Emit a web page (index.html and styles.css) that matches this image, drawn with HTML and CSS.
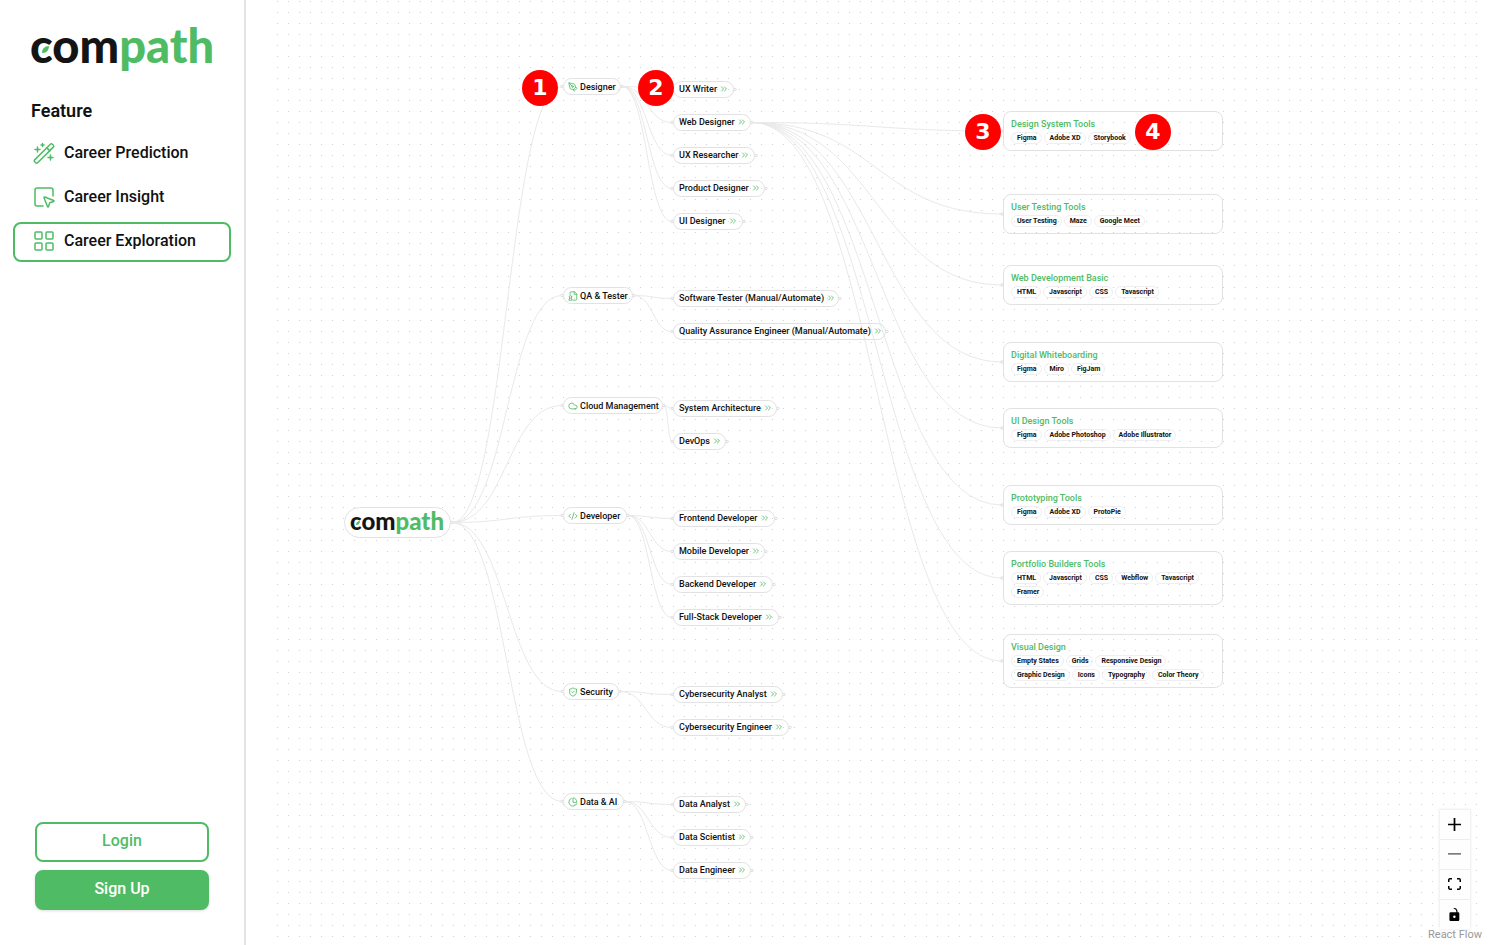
FILE: index.html
```html
<!DOCTYPE html>
<html lang="en">
<head>
<meta charset="utf-8">
<meta name="viewport" content="width=device-width, initial-scale=1">
<title>Compath – Career Exploration</title>
<link rel="stylesheet" href="styles.css">
</head>
<body>
<svg class="sprite" aria-hidden="true">
  <symbol id="leaf" viewBox="0 0 7 7"><path d="M0 7C0 3 2.500 0 7 0c-.2 4.500-2.500 7.200-7 7z"/></symbol>
  <symbol id="chevrons" viewBox="0 0 24 24"><path d="m6 17 5-5-5-5M13 17l5-5-5-5"/></symbol>
  <symbol id="pen" viewBox="0 0 24 24"><path d="M15.700 21.300a1 1 0 0 1-1.400 0l-1.600-1.600a1 1 0 0 1 0-1.400l5.600-5.600a1 1 0 0 1 1.400 0l1.600 1.600a1 1 0 0 1 0 1.400zM18 13l-1.400-6.900a1 1 0 0 0-.7-.8L3.200 2a1 1 0 0 0-1.200 1.200l3.300 12.700a1 1 0 0 0 .8.700L13 18M2.300 2.300l7.300 7.300"/><circle cx="11" cy="11" r="2"/></symbol>
  <symbol id="file" viewBox="0 0 24 24"><path d="M5 8V4a2 2 0 0 1 2-2h9l5 5v13a2 2 0 0 1-2 2h-7M15 2v6h6M4 17l-2 5h8l-2-5"/><circle cx="6" cy="14" r="3"/></symbol>
  <symbol id="cloud" viewBox="0 0 24 24"><path d="M17.500 19H9a7 7 0 1 1 6.700-9h1.800a4.500 4.500 0 1 1 0 9z"/></symbol>
  <symbol id="code" viewBox="0 0 24 24"><path d="m18 16 4-4-4-4M6 8l-4 4 4 4M14.500 4l-5 16"/></symbol>
  <symbol id="shield" viewBox="0 0 24 24"><path d="M20 13c0 5-3.500 7.500-8 9-4.500-1.500-8-4-8-9V5c3 0 5.500-1 8-3 2.500 2 5 3 8 3zM9 12l2 2 4-4"/></symbol>
  <symbol id="pie" viewBox="0 0 24 24"><path d="M21 12a9 9 0 0 0-9-10v10zM21.200 15.900A10 10 0 1 1 8 2.800"/></symbol>
</svg>

<div class="app">
  <aside class="sidebar">
    <a class="logo" href="#">com<span class="logo-green">path</span><svg class="leaf" aria-hidden="true"><use href="#leaf"/></svg></a>
    <h2 class="sidebar-title">Feature</h2>
    <nav class="menu">
      <a class="menu-item" href="#">
        <svg class="menu-icon" viewBox="0 0 24 24" aria-hidden="true"><rect x="-.5" y="10.400" width="25" height="4.200" rx="1.400" transform="rotate(-45 12 12.500)"/><path d="m14.800 6.900 3 3M5.500 6v5M3 8.500h5M10.500 2.500v3M9 4h3M18.500 14v5M16 16.500h5"/></svg>
        <span class="menu-label">Career Prediction</span>
      </a>
      <a class="menu-item" href="#">
        <svg class="menu-icon" viewBox="0 0 24 24" aria-hidden="true"><path d="M12.034 12.681a.498.498 0 0 1 .647-.647l9 3.500a.5.5 0 0 1-.033.943l-3.444 1.068a1 1 0 0 0-.66.66l-1.067 3.443a.5.5 0 0 1-.943.033zM21 11V5a2 2 0 0 0-2-2H5a2 2 0 0 0-2 2v14a2 2 0 0 0 2 2h6"/></svg>
        <span class="menu-label">Career Insight</span>
      </a>
      <a class="menu-item menu-item-active" href="#" aria-current="page">
        <svg class="menu-icon" viewBox="0 0 24 24" aria-hidden="true"><rect x="3" y="3" width="7" height="7" rx="1"/><rect x="14" y="3" width="7" height="7" rx="1"/><rect x="14" y="14" width="7" height="7" rx="1"/><rect x="3" y="14" width="7" height="7" rx="1"/></svg>
        <span class="menu-label">Career Exploration</span>
      </a>
    </nav>
    <div class="account">
      <button class="btn btn-outline" type="button">Login</button>
      <button class="btn btn-solid" type="button">Sign Up</button>
    </div>
  </aside>

  <main class="main">
    <div class="flow" id="flow">
      <svg class="edges" aria-hidden="true">
        <defs><pattern id="dots" width="11" height="11" patternUnits="userSpaceOnUse"><circle class="dot" cx="4.500" cy="1.500" r=".6"/></pattern></defs>
        <rect width="100%" height="100%" fill="url(#dots)"/>
        <g id="edges"></g>
      </svg>
      <div class="controls">
        <button class="control" type="button" aria-label="Zoom in"><svg viewBox="0 0 32 32"><path d="M32 18.133H18.133V32h-4.266V18.133H0v-4.266h13.867V0h4.266v13.867H32z"/></svg></button>
        <button class="control" type="button" aria-label="Zoom out" disabled><svg viewBox="0 0 32 5"><path d="M0 0h32v4.200H0z"/></svg></button>
        <button class="control" type="button" aria-label="Fit view"><svg viewBox="0 0 32 30"><path d="M3.692 4.630c0-.53.4-.938.939-.938h5.215V0H4.708C2.130 0 0 2.054 0 4.630v5.216h3.692V4.631zM27.354 0h-5.200v3.692h5.170c.53 0 .984.4.984.939v5.215H32V4.631A4.624 4.624 0 0027.354 0zm.954 24.830c0 .532-.4.940-.939.940h-5.215v3.768h5.215c2.577 0 4.631-2.130 4.631-4.707v-5.139h-3.692v5.139zm-23.677.940c-.531 0-.939-.4-.939-.940v-5.138H0v5.139c0 2.577 2.130 4.707 4.708 4.707h5.138V25.770H4.631z"/></svg></button>
        <button class="control" type="button" aria-label="Toggle lock"><svg viewBox="0 0 25 32"><path d="M21.333 10.667H19.810V7.619C19.810 3.429 16.380 0 12.190 0c-4.114 1.828-1.370 2.133.305 2.438 1.676.305 4.420 2.590 4.420 5.181v3.048H3.047A3.056 3.056 0 000 13.714v15.238A3.056 3.056 0 003.048 32h18.285a3.056 3.056 0 003.048-3.048V13.714a3.056 3.056 0 00-3.048-3.047zM12.190 24.533a3.056 3.056 0 01-3.047-3.047 3.056 3.056 0 013.047-3.048 3.056 3.056 0 013.048 3.048 3.056 3.056 0 01-3.048 3.047z"/></svg></button>
      </div>
      <a class="attribution" href="#">React Flow</a>
    </div>
  </main>
</div>
<script src="script.js"></script>
</body>
</html>
```

FILE: styles.css
```css
* { box-sizing: border-box; }

body {
  margin: 0;
  color: #111;
  background: #fff;
  font-family: Roboto, "Noto Sans", sans-serif;
}

a { color: inherit; text-decoration: none; }
button { font: inherit; color: inherit; cursor: pointer; }

.sprite { position: absolute; width: 0; height: 0; }
.app { display: flex; min-height: 100vh; }

/* Logo */
.logo {
  position: relative;
  padding: 0 0 8px 17px;
  color: #141414;
  font: 900 47px/38px Lato, sans-serif;
}
.logo-green { color: #4fbc65; }
.leaf {
  position: absolute;
  left: 29px;
  top: 20px;
  width: 7px;
  height: 7px;
  fill: #4fbc65;
}
.logo-small { padding: 0; font-size: 24px; line-height: 26px; }
.logo-small .leaf { left: 6px; top: 13px; width: 4px; height: 4px; }

/* Sidebar */
.sidebar {
  display: flex;
  flex-direction: column;
  flex: 0 0 246px;
  padding: 26px 13px 35px;
  border-right: 2px solid #e4e4e4;
}
.sidebar-title {
  margin: 27px 0 11px;
  padding-left: 18px;
  font-size: 18px;
  line-height: 24px;
  font-weight: 600;
}
.menu { display: flex; flex-direction: column; gap: 4px; }
.menu-item {
  display: flex;
  align-items: center;
  gap: 8px;
  height: 40px;
  padding: 0 17px;
  border: 2px solid transparent;
  border-radius: 8px;
  font-size: 16px;
  font-weight: 500;
  white-space: nowrap;
}
.menu-label { padding-bottom: 3px; }
.menu-item-active { border-color: #4fbc65; }
.menu-icon {
  width: 24px;
  height: 24px;
  margin-bottom: 2px;
  fill: none;
  stroke: #4fbc65;
  stroke-width: 1.5;
  stroke-linecap: round;
  stroke-linejoin: round;
}
.account {
  display: flex;
  flex-direction: column;
  gap: 8px;
  margin-top: auto;
  padding: 0 22px;
}
.btn {
  height: 40px;
  padding: 0 0 3px;
  border: 2px solid #4fbc65;
  border-radius: 8px;
  font-size: 16px;
  font-weight: 500;
}
.btn-outline { background: #fff; color: #4fbc65; }
.btn-solid { background: #4fbc65; color: #fff; box-shadow: 0 1px 3px #0002; }

/* Flow canvas */
.main { display: flex; flex: 1; min-width: 0; padding: 0 27px; }
.flow { position: relative; flex: 1; overflow: hidden; }
.edges { position: absolute; inset: 0; width: 100%; height: 100%; }
.dot { fill: #ccccd0; }
.edge { fill: none; stroke: #e9e9eb; }
.handle { fill: #fff; stroke: #dedee0; }

.node {
  position: absolute;
  display: flex;
  align-items: center;
  gap: 2px;
  height: 17px;
  padding: 0 5px 0 4px;
  border: 1px solid #e2e2e4;
  border-radius: 9px;
  background: transparent;
  font-size: 9px;
  line-height: 12px;
  font-weight: 500;
  white-space: nowrap;
}
.node-role { justify-content: space-between; padding: 0 4px 1px 5px; }
.node-root { height: 31px; padding: 0 5px 3px; border-radius: 16px; }
.node-icon {
  flex: none;
  width: 10px;
  height: 10px;
  fill: none;
  stroke: #4fbc65;
  stroke-width: 2;
  stroke-linecap: round;
  stroke-linejoin: round;
}

.card {
  position: absolute;
  width: 220px;
  padding: 6px 7px;
  border: 1px solid #e2e2e4;
  border-radius: 8px;
}
.card-title {
  margin: 0 0 2px;
  color: #4fbc65;
  font-size: 9px;
  line-height: 12px;
  font-weight: 500;
}
.tags {
  display: flex;
  flex-wrap: wrap;
  gap: 2px;
  margin: 0;
  padding: 0;
  list-style: none;
}
.tag {
  padding: 0 4px 0 5px;
  border: 1px solid #efeff1;
  border-radius: 6px;
  font-size: 7px;
  line-height: 10px;
  font-weight: 700;
}

.marker {
  position: absolute;
  display: grid;
  place-items: center;
  width: 36px;
  height: 36px;
  border-radius: 50%;
  background: #f00;
  color: #fff;
  font: 700 22px/1 "DejaVu Sans", sans-serif;
}

.controls {
  position: absolute;
  right: 15px;
  bottom: 15px;
  display: flex;
  flex-direction: column;
  box-shadow: 0 0 2px 1px #00000014;
}
.control {
  display: grid;
  place-items: center;
  width: 30px;
  height: 30px;
  padding: 0 1px 1px 0;
  border: 0;
  border-bottom: 1px solid #eee;
  background: #fefefe;
}
.control svg { width: 13px; max-height: 13px; }
.control:disabled svg { opacity: .5; }
.attribution {
  position: absolute;
  right: 0;
  bottom: 2px;
  padding: 0 3px;
  background: #ffffff80;
  color: #999;
  font-size: 11px;
  line-height: 16px;
}
```

FILE: script.js
```js
const root = { x: 71, y: 507, w: 107, h: 31 };

// x and y are the top left corner of each node on the canvas, w its width.
const fields = [
  { name: "Designer", icon: "pen", y: 78, w: 58, roles: [["UX Writer", 81, 61], ["Web Designer", 114, 78], ["UX Researcher", 147, 82], ["Product Designer", 180, 92], ["UI Designer", 213, 70]] },
  { name: "QA & Tester", icon: "file", y: 287, w: 70, roles: [["Software Tester (Manual/Automate)", 290, 166], ["Quality Assurance Engineer (Manual/Automate)", 323, 213]] },
  { name: "Cloud Management", icon: "cloud", y: 397, w: 100, roles: [["System Architecture", 400, 104], ["DevOps", 433, 53]] },
  { name: "Developer", icon: "code", y: 507, w: 64, roles: [["Frontend Developer", 510, 102], ["Mobile Developer", 543, 92], ["Backend Developer", 576, 100], ["Full-Stack Developer", 609, 106]] },
  { name: "Security", icon: "shield", y: 683, w: 56, roles: [["Cybersecurity Analyst", 686, 110], ["Cybersecurity Engineer", 719, 116]] },
  { name: "Data & AI", icon: "pie", y: 793, w: 61, roles: [["Data Analyst", 796, 73], ["Data Scientist", 829, 78], ["Data Engineer", 862, 78]] }
];

const skills = [
  ["Design System Tools", 111, 40, ["Figma", "Adobe XD", "Storybook"]],
  ["User Testing Tools", 194, 40, ["User Testing", "Maze", "Google Meet"]],
  ["Web Development Basic", 265, 40, ["HTML", "Javascript", "CSS", "Tavascript"]],
  ["Digital Whiteboarding", 342, 40, ["Figma", "Miro", "FigJam"]],
  ["UI Design Tools", 408, 40, ["Figma", "Adobe Photoshop", "Adobe Illustrator"]],
  ["Prototyping Tools", 485, 40, ["Figma", "Adobe XD", "ProtoPie"]],
  ["Portfolio Builders Tools", 551, 54, ["HTML", "Javascript", "CSS", "Webflow", "Tavascript", "Framer"]],
  ["Visual Design", 634, 54, ["Empty States", "Grids", "Responsive Design", "Graphic Design", "Icons", "Typography", "Color Theory"]]
];

const markers = [["1", 249, 70], ["2", 365, 70], ["3", 692, 114], ["4", 862, 114]];

const FIELD_X = 290, ROLE_X = 400, SKILL_X = 730, HALF = 8.5;
const flow = document.getElementById("flow");
const edges = document.getElementById("edges");

function place(tag, className, x, y, html, w) {
  const el = document.createElement(tag);
  el.className = className;
  el.style.left = x + "px";
  el.style.top = y + "px";
  if (w) el.style.width = w + "px";
  el.innerHTML = html;
  flow.append(el);
}

function draw(name, attrs) {
  const el = document.createElementNS("http://www.w3.org/2000/svg", name);
  for (const key in attrs) el.setAttribute(key, attrs[key]);
  edges.append(el);
}

function handle(x, y) {
  draw("circle", { class: "handle", cx: x, cy: y, r: 1.2 });
}

function connect(x1, y1, x2, y2) {
  const mid = (x1 + x2) / 2;
  draw("path", { class: "edge", d: `M${x1} ${y1}C${mid} ${y1} ${mid} ${y2} ${x2} ${y2}` });
}

const icon = id => `<svg class="node-icon" aria-hidden="true"><use href="#${id}"/></svg>`;
const escape = text => text.replace("&", "&amp;");

const rootY = root.y + root.h / 2;
place("div", "node node-root", root.x, root.y, '<span class="logo logo-small">com<span class="logo-green">path</span><svg class="leaf" aria-hidden="true"><use href="#leaf"/></svg></span>', root.w);

for (const field of fields) {
  const fy = field.y + HALF;
  const out = FIELD_X + field.w + 1;
  connect(root.x + root.w + 1, rootY, FIELD_X - 1, fy);
  place("div", "node", FIELD_X, field.y, icon(field.icon) + `<span>${escape(field.name)}</span>`, field.w);
  for (const [name, y, w] of field.roles) {
    connect(out, fy, ROLE_X - 1, y + HALF);
    place("button", "node node-role", ROLE_X, y, `<span>${name}</span>` + icon("chevrons"), w);
    if (name === "Web Designer") {
      for (const [, sy, h] of skills) connect(ROLE_X + w + 1, y + HALF, SKILL_X - 1, sy + h / 2);
    }
    handle(ROLE_X - 1, y + HALF);
    handle(ROLE_X + w + 1, y + HALF);
  }
  handle(FIELD_X - 1, fy);
  handle(out, fy);
}
handle(root.x + root.w + 1, rootY);

for (const [title, y, h, tags] of skills) {
  handle(SKILL_X - 1, y + h / 2);
  place("section", "card", SKILL_X, y, `<h3 class="card-title">${title}</h3><ul class="tags">${tags.map(t => `<li class="tag">${t}</li>`).join("")}</ul>`);
}

for (const [label, x, y] of markers) place("div", "marker", x, y, label);
```
